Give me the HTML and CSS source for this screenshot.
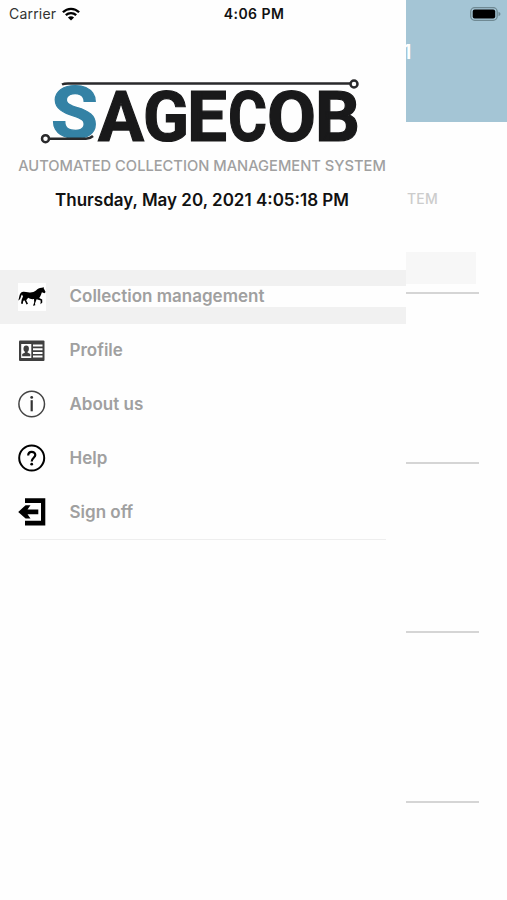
FILE: index.html
```html
<!DOCTYPE html>
<html lang="en">
<head>
<meta charset="utf-8">
<title>Sagecob</title>
<link rel="stylesheet" href="styles.css">
</head>
<body>
<div class="app">
  <header class="status">
    <div class="carrier"><span>Carrier</span>
      <svg width="18" height="14" viewBox="0 0 18 14"><g fill="none" stroke="#000" stroke-width="2.3"><path d="M.9 5.3C5.5.7 12.500.7 17.100 5.300"/><path d="M3.800 8.200C6.800 5.300 11.200 5.300 14.200 8.200"/></g><path d="M9 13.600L5.900 10.500Q9 7.900 12.100 10.500Z"/></svg>
    </div>
    <span class="clock">4:06 PM</span>
    <svg class="battery" width="31" height="14" viewBox="0 0 31 14"><rect x=".7" y=".7" width="26.500" height="12.600" rx="4" fill="#a4c5d5" stroke="#6f8993" stroke-width="1.300"/><rect x="2.700" y="2.500" width="22.500" height="9" rx="2" fill="#000"/><path d="M28.500 4.700Q30.500 5.500 30.500 7T28.500 9.300Z" fill="#6f8993"/></svg>
  </header>
  <aside class="drawer">
    <svg class="logo" width="406" height="74" viewBox="0 74 406 74">
      <g class="wordmark">
        <text class="blue" x="51" y="137.500" textLength="47" lengthAdjust="spacingAndGlyphs">S</text>
        <text x="98" y="140.500" textLength="46" lengthAdjust="spacingAndGlyphs">A</text>
        <text x="143" y="140.500" textLength="46" lengthAdjust="spacingAndGlyphs">G</text>
        <text x="187" y="140.500" textLength="40" lengthAdjust="spacingAndGlyphs">E</text>
        <text x="228" y="140.500" textLength="39" lengthAdjust="spacingAndGlyphs">C</text>
        <text x="267" y="140.500" textLength="49" lengthAdjust="spacingAndGlyphs">O</text>
        <text x="315" y="140.500" textLength="45" lengthAdjust="spacingAndGlyphs">B</text>
      </g>
      <g fill="none" stroke="#29292b" stroke-width="2.500"><path d="M62 84.500Q64 83.500 68 83.500H350M49 138.700H86Q90 138.700 93 136"/><circle cx="354" cy="84" r="3.500"/><circle cx="45.500" cy="138.700" r="3.500"/></g>
    </svg>
    <p class="tagline">AUTOMATED COLLECTION MANAGEMENT SYSTEM</p>
    <p class="date">Thursday, May 20, 2021 4:05:18 PM</p>
    <nav class="menu">
      <a class="item active">
        <svg class="horse" width="28" height="28" viewBox="0 0 28 28"><path fill="#000" d="M.3 17.500C1.500 15 1 10 4.200 9C6 8.200 8 9 10 9.200C13 9.700 16 9.300 18 7.500C20 5.500 21.500 4.500 24.200 4.700L25.600 4L25.700 5.300L27.600 9L26.500 10.300L23.900 9.200C23 11.500 22.500 13.500 21.200 15L24.200 16.500L24.300 19.500L22.500 21.200L22.700 17.500L18.600 16.300L17 20.500L17.300 22.200L15 22.700L16.200 19.500L16 16C13.500 16.500 11.500 15.500 10.200 14.800L8.200 17.300L10 20.700L8.500 21.400L6.700 17.500L5.300 17.700L4.700 20.900L3 20.500L3.700 16.500L5 13.500L4 11.500C2.800 12.500 3 16.500 .3 17.500Z"/></svg>
        <span class="label">Collection management</span></a>
      <a class="item">
        <svg width="28" height="28" viewBox="0 0 28 28"><rect x="1" y="3.500" width="25.500" height="20.500" rx="1" fill="#3f3f3f"/><path fill="#fff" d="M3.200 7H13.300V21H3.200ZM15 7.500H24.500V9.500H15ZM15 11.200H24.500V13.200H15ZM15 14.900H24.500V16.900H15ZM15 18.600H24.500V20.600H15Z"/><g fill="#3f3f3f"><ellipse cx="8.200" cy="11.700" rx="2.700" ry="3.200"/><path d="M7 13.500H9.500V15.500L12.300 17V19.200H4.200V17L7 15.500Z"/></g></svg>
        <span class="label">Profile</span></a>
      <a class="item">
        <svg width="28" height="28" viewBox="0 0 28 28"><circle cx="13.700" cy="14" r="12.800" fill="none" stroke="#444" stroke-width="1.500"/><circle cx="13.700" cy="7.400" r="1.400" fill="#333"/><path d="M13.700 10.200V21.300" stroke="#333" stroke-width="2.200"/></svg>
        <span class="label">About us</span></a>
      <a class="item">
        <svg width="28" height="28" viewBox="0 0 28 28"><circle cx="13.700" cy="14" r="12.500" fill="none" stroke="#000" stroke-width="2"/><path d="M10.200 11.500C10.200 6.500 17.300 6.800 17.300 11.100C17.300 13.800 13.700 13.900 13.700 17.500" fill="none" stroke="#000" stroke-width="2.200"/><circle cx="13.700" cy="20.200" r="1.400"/></svg>
        <span class="label">Help</span></a>
      <a class="item">
        <svg width="28" height="28" viewBox="0 0 28 28"><path d="M7 5V.3H27.300V27.500H7V22.800H23V5Z"/><path d="M.2 13.900L7.600 7.300H12.500L9.500 11.600H20.300V16.200H9.500L12.500 20.500H7.600Z"/></svg>
        <span class="label">Sign off</span></a>
    </nav>
  </aside>
  <main class="page">
    <div class="bar"><span class="title">1</span></div>
    <div class="sub">TEM</div>
    <div class="field"></div>
    <div class="line"></div><div class="line"></div><div class="line"></div><div class="line"></div>
  </main>
</div>
</body>
</html>
```
FILE: styles.css
```css
* { box-sizing: border-box; }
body { margin: 0; background: #fefefe; font-family: Inter, "Liberation Sans", sans-serif; }
.app { position: relative; display: flex; width: 507px; height: 900px; overflow: hidden; }
.status { position: absolute; z-index: 2; top: 0; left: 0; width: 507px; height: 28px; padding: 0 6px 0 9px; display: grid; grid-template-columns: 1fr auto 1fr; align-items: center; font-size: 14px; line-height: 28px; color: #111; }
.carrier { display: flex; align-items: center; gap: 6px; letter-spacing: .2px; color: #333; }
.clock { font-weight: 600; letter-spacing: .45px; margin-right: 2px; }
.battery { justify-self: end; }
.drawer { position: relative; z-index: 1; width: 406px; background: #fefefe; padding-top: 74px; }
.logo { display: block; overflow: visible; }
.wordmark { font-family: Roboto, sans-serif; font-size: 70px; font-weight: 700; fill: #19191a; stroke: #19191a; stroke-width: 1.2px; }
.wordmark .blue { font-size: 73px; fill: #3482a5; stroke: #3482a5; }
.tagline, .date { margin: 0; text-align: center; white-space: nowrap; }
.tagline { padding: 7px 2px 0 0; font-size: 14.7px; line-height: 22px; font-weight: 500; color: #a0a0a0; }
.date { padding: 12px 2px 0 0; font-size: 17px; line-height: 22px; font-weight: 600; color: #111; }
.menu { margin-top: 59px; position: relative; }
.menu::after { content: ""; display: block; height: 1px; margin: 0 20px; background: #eee; }
.item { display: flex; align-items: center; height: 53.8px; padding-left: 18px; gap: 23.5px; }
.item svg { flex: none; }
.active { background: #f1f1f1; }
.horse { background: #fefefe; }
.label { flex: 1; height: 21px; font-size: 17px; line-height: 21px; font-weight: 600; color: #a0a0a0; white-space: nowrap; }
.active .label { background: #fefefe; }
.page { width: 101px; }
.bar { height: 122px; padding-top: 41px; background: #a4c5d5; }
.title { display: block; margin-left: -3px; font-size: 20px; line-height: 22px; font-weight: 600; color: #fff; }
.sub { margin-top: 66px; padding-left: 1px; font-size: 14px; line-height: 22px; font-weight: 500; color: #ccc; letter-spacing: .2px; }
.field { width: 70px; height: 32px; margin-top: 42px; background: #f7f7f7; }
.line { width: 73px; height: 2px; margin-top: 167.700px; background: #d5d5d5; }
.field + .line { margin-top: 8px; }
```
